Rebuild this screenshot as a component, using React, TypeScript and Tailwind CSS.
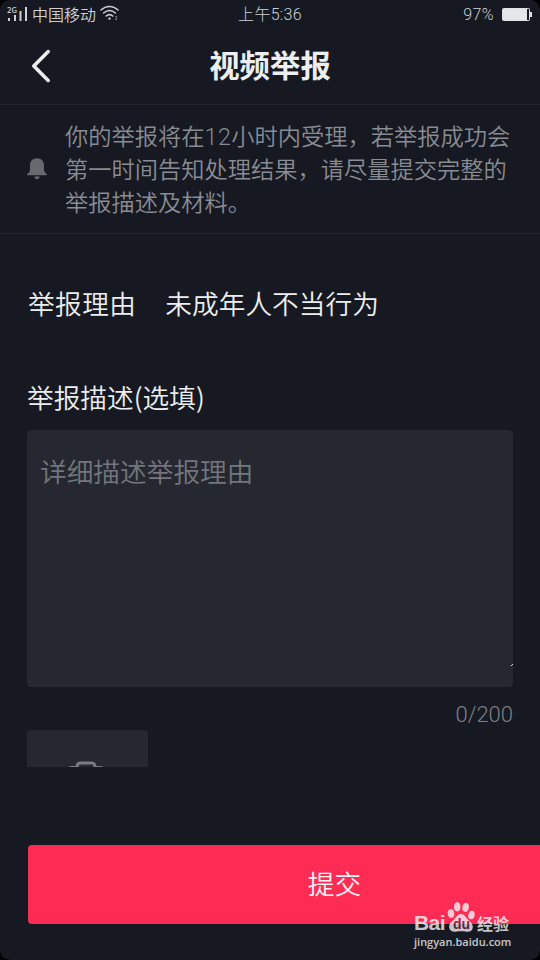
import React, { useState } from 'react';

const MAX_LENGTH = 200;

const SignalIcon = () => (
  <div className="relative w-[21px] h-5">
    <svg className="absolute left-0 top-0" width="21" height="20" viewBox="0 0 21 20" fill="#cdd0d4">
      <rect x="1" y="17" width="2" height="3" />
      <rect x="7" y="14" width="2" height="6" />
      <rect x="12.5" y="10" width="2" height="10" />
      <rect x="18" y="6" width="2" height="14" />
    </svg>
    <span className="absolute left-0 top-[5px] text-[8px] leading-[8px] font-medium">2G</span>
  </div>
);

const WifiIcon = () => (
  <svg width="19" height="16" viewBox="0 0 19 16" fill="none" stroke="#cdd0d4" strokeWidth="1.5" strokeLinecap="round">
    <path d="M1 5C6 0.2 13 0.2 18 5" />
    <path d="M3.6 8C7.2 4.8 11.8 4.8 15.4 8" />
    <path d="M6.2 11C8.2 9.3 10.8 9.3 12.8 11" />
    <circle cx="9.5" cy="13.6" r="1.2" fill="#cdd0d4" stroke="none" />
    <path d="M15 12.3L16.2 10.9L17.4 12.3ZM15 13.7L16.2 15.1L17.4 13.7Z" fill="#cdd0d4" stroke="none" />
  </svg>
);

const BatteryIcon = () => (
  <svg width="30" height="14" viewBox="0 0 30 14" fill="none">
    <rect x="0.5" y="0.5" width="27" height="12" rx="0.8" stroke="#dfe2e4" />
    <rect x="1" y="1" width="24" height="11" fill="#e4e7e8" />
    <rect x="28" y="4" width="2" height="5" fill="#dfe2e4" />
  </svg>
);

const BellIcon = () => (
  <svg width="20" height="22" viewBox="0 0 20 22" fill="#66696e">
    <path d="M10 0.3C5.6 0.3 3 3.4 3 7.5V12C3 14 1.6 15 0.4 15.8C-0.2 16.4 0 17.3 0.9 17.3H19.1C20 17.3 20.2 16.4 19.6 15.8C18.4 15 17 14 17 12V7.5C17 3.4 14.4 0.3 10 0.3Z" />
    <path d="M7.4 18.6H12.6C12.4 20.4 11.4 21.3 10 21.3C8.6 21.3 7.6 20.4 7.4 18.6Z" />
  </svg>
);

const CameraIcon = () => (
  <svg width="44" height="36" viewBox="0 0 44 36" fill="none" stroke="#797c82" strokeWidth="3">
    <path d="M12.8 6.5L13.4 4C13.7 2.6 14.6 2 16 2H28C29.4 2 30.3 2.6 30.6 4L31.2 6.5H36C38.5 6.5 40 8 40 10.5V30C40 32.5 38.5 34 36 34H8C5.5 34 4 32.5 4 30V10.5C4 8 5.5 6.5 8 6.5Z" />
    <circle cx="22" cy="20" r="7" />
  </svg>
);

const PawIcon = () => (
  <svg width="28" height="31" viewBox="0 0 28 31" fill="white">
    <ellipse cx="4" cy="11.5" rx="3.2" ry="4.4" transform="rotate(-12 4 11.5)" />
    <ellipse cx="10.2" cy="4.8" rx="3.2" ry="4.6" />
    <ellipse cx="18.6" cy="5.4" rx="3.2" ry="4.5" transform="rotate(10 18.6 5.4)" />
    <ellipse cx="24.4" cy="13" rx="3.2" ry="4.3" transform="rotate(14 24.4 13)" />
    <path d="M14 12C10.5 12 9 15.5 6.5 18C3.5 20.7 1.8 22.2 2.2 25.6C2.7 29 5.6 30 8.5 29.7C12 29.2 16 29.2 19.5 29.7C23.2 30.1 25.6 28.5 25.8 25.4C26 22 23.8 20.4 21.2 17.8C18.8 15.4 17.5 12 14 12Z" />
  </svg>
);

const StatusBar = () => (
  <div className="grid grid-cols-3 h-7 text-base leading-7 font-[350] text-[#cdd0d4]">
    <div className="flex items-center pl-[7px] whitespace-nowrap">
      <div className="flex h-7 items-start">
        <SignalIcon />
      </div>
      <span className="ml-[4px] -mt-[2px]">中国移动</span>
      <span className="ml-[4px] -mt-1"><WifiIcon /></span>
    </div>
    <div className="pt-px text-center font-['Roboto','Noto_Sans_CJK_SC',sans-serif] font-light tracking-[0.3px]">上午5:36</div>
    <div className="flex items-center justify-end gap-2 pr-[8px]">
      <span className="font-['Roboto'] font-light tracking-[0.4px]">97%</span>
      <BatteryIcon />
    </div>
  </div>
);

const Header = () => (
  <header className="relative flex h-[77px] items-center justify-center border-b border-[#20242d]">
    <button className="absolute left-[31px] top-[21px]" aria-label="返回">
      <svg width="20" height="34" viewBox="0 0 20 34" fill="none" stroke="#eceef0" strokeWidth="3.6" strokeLinecap="round" strokeLinejoin="round">
        <path d="M17.2 2.6L2.8 17L17.2 31.4" />
      </svg>
    </button>
    <h1 className="-mt-[3px] text-[30.4px] font-bold text-[#eceef0]">视频举报</h1>
  </header>
);

const Watermark = () => (
  <div className="absolute left-[414px] top-[902px] w-[98px] text-white opacity-75">
    <div className="flex h-[31px] items-end">
      <span className="-mb-px w-[33px] font-['Liberation_Sans'] text-[21px] leading-[22px] font-bold tracking-[-0.6px]">Bai</span>
      <span className="relative shrink-0 self-start">
        <PawIcon />
        <span className="absolute left-[6px] top-[14px] font-['Liberation_Sans'] text-[14px] leading-[16px] font-bold text-[#7b2440]">du</span>
      </span>
      <span className="ml-0.5 shrink-0 text-base leading-[20px] font-bold">经验</span>
    </div>
    <div className="mt-[2px] font-['Open_Sans'] text-[11px] leading-[14px] font-semibold whitespace-nowrap">jingyan.baidu.com</div>
  </div>
);

const App: React.FC = () => {
  const [description, setDescription] = useState('');

  return (
    <div className="bg-black">
      <div className="relative h-[960px] w-[540px] overflow-hidden rounded-[10px] bg-[#161922] font-['Noto_Sans_CJK_SC',sans-serif]">
        <StatusBar />
        <Header />

        {/* Notice */}
        <section className="flex h-[129px] items-center border-b border-[#282b33] pl-[27px]">
          <BellIcon />
          <p className="mt-[2px] ml-[18px] font-['Roboto','Noto_Sans_CJK_SC',sans-serif] text-[23.25px] leading-[33px] font-[350] text-[#898c92] whitespace-nowrap">
            你的举报将在<span className="tracking-[0.5px]">12</span>小时内受理，若举报成功会<br />
            第一时间告知处理结果，请尽量提交完整的<br />
            举报描述及材料。
          </p>
        </section>

        <main className="px-[27px] pt-[49px] text-[26.7px] leading-10 font-[350] text-[#eceef0]">
          <div className="flex gap-[29px] pl-px">
            <span className="tracking-[0.4px]">举报理由</span>
            <span>未成年人不当行为</span>
          </div>

          <div className="mt-[54px]">举报描述(选填)</div>
          <div className="relative mt-[13px] h-[257px] w-[486px]">
            <textarea
              className="block size-full resize-none rounded-[4px] bg-[#252830] px-[13px] pt-[21px] outline-none placeholder:text-[#73767c]"
              placeholder="详细描述举报理由"
              maxLength={MAX_LENGTH}
              value={description}
              onChange={e => setDescription(e.target.value)}
            />
            <svg className="absolute right-0 bottom-[21px]" width="2" height="2" viewBox="0 0 2 2">
              <path d="M0 2L2 0" stroke="#d5d7da" />
            </svg>
          </div>
          <div className="mt-3 text-right font-['Roboto'] text-[22px] leading-8 font-light text-[#7d8086]">
            {description.length}/{MAX_LENGTH}
          </div>

          {/* Upload tile, cut off by the form's lower edge */}
          <div className="-mt-px h-[37px] overflow-hidden">
            <button className="flex h-[121px] w-[121px] justify-center rounded-[4px] bg-[#252830] pt-[31px] pr-[3px]" aria-label="上传图片">
              <CameraIcon />
            </button>
          </div>
        </main>

        <button className="mt-[78px] ml-7 block h-[79px] w-[612px] rounded-[4px] bg-[#fe2c55] pb-0.5 pl-px text-[26.7px] font-[350] text-[#fdf3f5]">
          提交
        </button>

        <Watermark />
      </div>
    </div>
  );
};

export default App;
